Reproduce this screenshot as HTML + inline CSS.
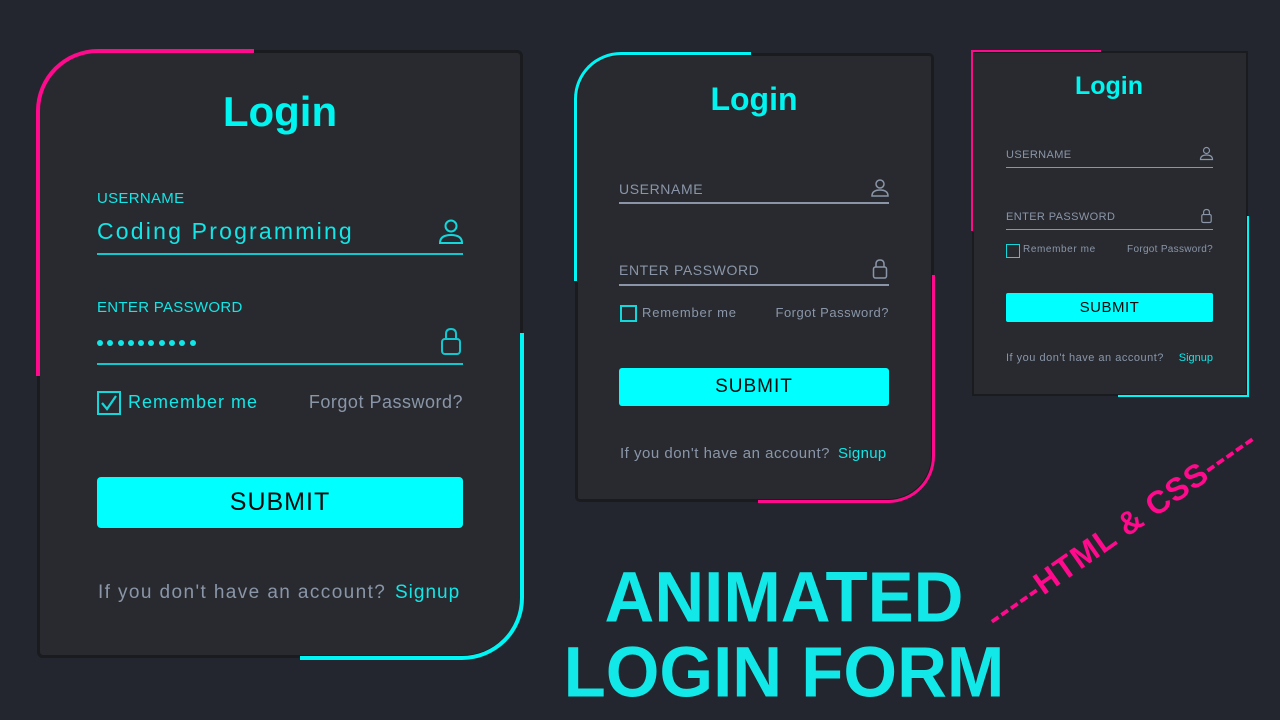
<!DOCTYPE html>
<html><head><meta charset="utf-8"><style>
*{margin:0;padding:0;box-sizing:border-box}
body{width:1280px;height:720px;background:#23262e;position:relative;overflow:hidden;font-family:"Liberation Sans",sans-serif}
.a{position:absolute;line-height:1;white-space:nowrap}
.card{position:absolute;background:#282a30;border:3px solid #1a1b1f}
.g{color:#8a96a8}
.c{color:#12e6e6}
.btn{position:absolute;background:#00ffff;color:#0a0a0a;text-align:center}
.dots span{display:inline-block;width:6px;height:6px;border-radius:50%;background:#12e6e6;margin-right:4.3px}
</style></head><body>

<!-- Card 1 -->
<div class="card" style="left:37px;top:50px;width:486px;height:608px;border-radius:60px 6px 60px 6px"></div>
<div class="a" style="left:36px;top:49px;width:218px;height:327px;border-top:4px solid #ff0a8c;border-left:4px solid #ff0a8c;border-top-left-radius:62px"></div>
<div class="a" style="left:300px;top:333px;width:224px;height:327px;border-right:4px solid #00f5f5;border-bottom:4px solid #00f5f5;border-bottom-right-radius:62px"></div>
<div class="a c" style="left:180px;width:200px;text-align:center;top:91px;font-size:42px;font-weight:bold;color:#00f5f0">Login</div>
<div class="a c" style="left:97px;top:191px;font-size:15px;letter-spacing:.3px">USERNAME</div>
<div class="a c" style="left:97px;top:220px;font-size:23px;letter-spacing:2.2px">Coding Programming</div>
<svg class="a" style="left:438px;top:218px" width="26" height="28" viewBox="0 0 26 28"><circle cx="13" cy="8" r="5.5" fill="none" stroke="#12d8dc" stroke-width="2"/><path d="M2 25 Q2 17 13 17 Q24 17 24 25 Z" fill="none" stroke="#12d8dc" stroke-width="2"/></svg>
<div class="a" style="left:97px;top:253px;width:366px;height:2px;background:#12c8d0"></div>
<div class="a c" style="left:97px;top:300px;font-size:15px;letter-spacing:.3px">ENTER PASSWORD</div>
<div class="a dots" style="left:97px;top:339px;line-height:6px"><span></span><span></span><span></span><span></span><span></span><span></span><span></span><span></span><span></span><span></span></div>
<svg class="a" style="left:439px;top:326px" width="24" height="30" viewBox="0 0 24 30"><path d="M7 13 V8 Q7 3 12 3 Q17 3 17 8 V13" fill="none" stroke="#12c8d0" stroke-width="2"/><rect x="3" y="13" width="18" height="15" rx="3" fill="none" stroke="#12c8d0" stroke-width="2"/></svg>
<div class="a" style="left:97px;top:363px;width:366px;height:2px;background:#12c8d0"></div>
<div class="a" style="left:97px;top:391px;width:24px;height:24px;border:2px solid #12d8dc"></div>
<svg class="a" style="left:97px;top:391px" width="24" height="24"><path d="M5 12 L10 18 L19 5" fill="none" stroke="#12d8dc" stroke-width="2.2"/></svg>
<div class="a c" style="left:128px;top:393px;font-size:18px;letter-spacing:1px">Remember me</div>
<div class="a g" style="left:263px;width:200px;text-align:right;top:393px;font-size:18px;letter-spacing:.5px">Forgot Password?</div>
<div class="btn" style="left:97px;top:477px;width:366px;height:51px;border-radius:4px;font-size:25px;line-height:51px;letter-spacing:1px">SUBMIT</div>
<div class="a g" style="left:98px;top:583px;font-size:19px;letter-spacing:1.4px">If you don't have an account?</div>
<div class="a c" style="left:395px;top:583px;font-size:19px;letter-spacing:1px">Signup</div>

<!-- Card 2 -->
<div class="card" style="left:575px;top:53px;width:359px;height:449px;border-radius:46px 5px 46px 5px"></div>
<div class="a" style="left:574px;top:52px;width:177px;height:229px;border-top:3px solid #00f5f5;border-left:3px solid #00f5f5;border-top-left-radius:47px"></div>
<div class="a" style="left:758px;top:275px;width:177px;height:228px;border-right:3px solid #ff0a8c;border-bottom:3px solid #ff0a8c;border-bottom-right-radius:47px"></div>
<div class="a c" style="left:654px;width:200px;text-align:center;top:83px;font-size:32px;font-weight:bold;color:#00f5f0">Login</div>
<div class="a g" style="left:619px;top:182px;font-size:14px;letter-spacing:.6px">USERNAME</div>
<svg class="a" style="left:870px;top:178px" width="20" height="20" viewBox="0 0 20 20"><circle cx="10" cy="6" r="4" fill="none" stroke="#8a96a8" stroke-width="1.5"/><path d="M2 18 Q2 12 10 12 Q18 12 18 18 Z" fill="none" stroke="#8a96a8" stroke-width="1.5"/></svg>
<div class="a" style="left:619px;top:202px;width:270px;height:1.5px;background:#8a96a8"></div>
<div class="a g" style="left:619px;top:263px;font-size:14px;letter-spacing:.6px">ENTER PASSWORD</div>
<svg class="a" style="left:871px;top:258px" width="18" height="22" viewBox="0 0 18 22"><path d="M5 9 V6 Q5 2 9 2 Q13 2 13 6 V9" fill="none" stroke="#8a96a8" stroke-width="1.5"/><rect x="2.5" y="9" width="13" height="11" rx="2" fill="none" stroke="#8a96a8" stroke-width="1.5"/></svg>
<div class="a" style="left:619px;top:284px;width:270px;height:1.5px;background:#8a96a8"></div>
<div class="a" style="left:620px;top:305px;width:17px;height:17px;border:2px solid #12d8dc"></div>
<div class="a g" style="left:642px;top:306px;font-size:13px;letter-spacing:.8px">Remember me</div>
<div class="a g" style="left:739px;width:150px;text-align:right;top:306px;font-size:13px;letter-spacing:.5px">Forgot Password?</div>
<div class="btn" style="left:619px;top:368px;width:270px;height:38px;border-radius:3px;font-size:19px;line-height:38px;letter-spacing:1px">SUBMIT</div>
<div class="a g" style="left:620px;top:446px;font-size:15px;letter-spacing:.5px">If you don't have an account?</div>
<div class="a c" style="left:838px;top:446px;font-size:15px;letter-spacing:.3px">Signup</div>

<!-- Card 3 -->
<div class="card" style="left:972px;top:51px;width:276px;height:345px;border-width:2px"></div>
<div class="a" style="left:971px;top:50px;width:130px;height:181px;border-top:2px solid #ff0a8c;border-left:2px solid #ff0a8c"></div>
<div class="a" style="left:1118px;top:216px;width:131px;height:181px;border-right:2px solid #00f5f5;border-bottom:2px solid #00f5f5"></div>
<div class="a c" style="left:1009px;width:200px;text-align:center;top:74px;font-size:25px;font-weight:bold;color:#00f5f0">Login</div>
<div class="a g" style="left:1006px;top:150px;font-size:11px;letter-spacing:.4px">USERNAME</div>
<svg class="a" style="left:1199px;top:146px" width="15" height="15" viewBox="0 0 20 20"><circle cx="10" cy="6" r="4" fill="none" stroke="#8a96a8" stroke-width="1.6"/><path d="M2 18 Q2 12 10 12 Q18 12 18 18 Z" fill="none" stroke="#8a96a8" stroke-width="1.6"/></svg>
<div class="a" style="left:1006px;top:167px;width:207px;height:1px;background:#8a96a8"></div>
<div class="a g" style="left:1006px;top:212px;font-size:11px;letter-spacing:.4px">ENTER PASSWORD</div>
<svg class="a" style="left:1200px;top:208px" width="13" height="16" viewBox="0 0 18 22"><path d="M5 9 V6 Q5 2 9 2 Q13 2 13 6 V9" fill="none" stroke="#8a96a8" stroke-width="1.6"/><rect x="2.5" y="9" width="13" height="11" rx="2" fill="none" stroke="#8a96a8" stroke-width="1.6"/></svg>
<div class="a" style="left:1006px;top:229px;width:207px;height:1px;background:#8a96a8"></div>
<div class="a" style="left:1006px;top:244px;width:14px;height:14px;border:1.5px solid #12d8dc"></div>
<div class="a g" style="left:1023px;top:245px;font-size:10px;letter-spacing:.6px">Remember me</div>
<div class="a g" style="left:1093px;width:120px;text-align:right;top:245px;font-size:10px;letter-spacing:.3px">Forgot Password?</div>
<div class="btn" style="left:1006px;top:293px;width:207px;height:29px;border-radius:2px;font-size:15px;line-height:29px;letter-spacing:.5px">SUBMIT</div>
<div class="a g" style="left:1006px;top:353px;font-size:11px;letter-spacing:.5px">If you don't have an account?</div>
<div class="a c" style="left:1163px;width:50px;text-align:right;top:353px;font-size:11px">Signup</div>

<!-- Headline -->
<div class="a" style="left:540px;width:488px;text-align:center;top:561px;font-size:69px;font-weight:bold;color:#12e8e8;transform:scaleY(1.04);transform-origin:center top">ANIMATED</div>
<div class="a" style="left:540px;width:488px;text-align:center;top:636px;font-size:69px;font-weight:bold;color:#12e8e8;transform:scaleY(1.04);transform-origin:center top">LOGIN FORM</div>
<div class="a" style="left:921px;width:400px;text-align:center;top:512px;font-size:32px;font-weight:bold;letter-spacing:1px;color:#ff0a8c;transform:rotate(-35deg);transform-origin:200px 16px">-----HTML &amp; CSS-----</div>
</body></html>
